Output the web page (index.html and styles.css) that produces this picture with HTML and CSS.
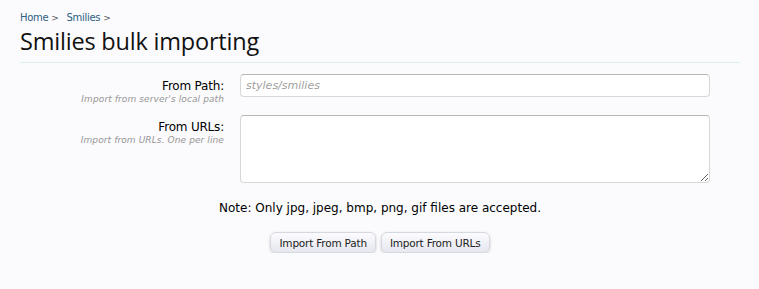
FILE: index.html
```html
<!DOCTYPE html>
<html lang="en">
<head>
    <meta charset="UTF-8">
    <meta name="viewport" content="width=device-width, initial-scale=1.0">
    <title>Smilies bulk importing</title>
    <link rel="stylesheet" href="styles.css">
</head>
<body>
    <div class="pageContent">
        <div class="breadcrumb">
            <a href="#">Home</a><span class="arrow">&gt;</span>
            <a href="#">Smilies</a><span class="arrow">&gt;</span>
        </div>
        <h1 class="titleBar">Smilies bulk importing</h1>

        <form class="xenForm">
            <div class="ctrlUnit">
                <div class="ctrlLabel">
                    <label for="path">From Path:</label>
                    <dfn>Import from server's local path</dfn>
                </div>
                <input id="path" class="textCtrl" type="text" placeholder="styles/smilies">
            </div>
            <div class="ctrlUnit">
                <div class="ctrlLabel">
                    <label for="urls">From URLs:</label>
                    <dfn>Import from URLs. One per line</dfn>
                </div>
                <textarea id="urls" class="textCtrl textArea"></textarea>
            </div>

            <p class="note">Note: Only jpg, jpeg, bmp, png, gif files are accepted.</p>

            <div class="submitUnit">
                <button type="button" class="button">Import From Path</button>
                <button type="button" class="button">Import From URLs</button>
            </div>
        </form>
    </div>
</body>
</html>
```

FILE: styles.css
```css
*
{
    box-sizing: border-box;
}
body
{
    margin: 0px;
    background-color: #fbfbfd;
    font-family: "DejaVu Sans", Verdana, sans-serif;
    font-size: 11px;
    color: #000;
}
.pageContent
{
    padding: 11px 19px 0 20px;
}
.breadcrumb
{
    font-size: 10px;
    height: 14px;
    line-height: 14px;
    letter-spacing: -0.3px;
}
.breadcrumb a
{
    color: #2b6082;
    text-decoration: none;
}
.breadcrumb .arrow
{
    color: #555;
    margin: 0 5px 0 3px;
    font-size: 9px;
}
.titleBar
{
    margin: 0;
    font-family: "Open Sans", "DejaVu Sans", sans-serif;
    font-weight: normal;
    font-size: 23.5px;
    line-height: 33px;
    letter-spacing: -0.2px;
    color: #111;
    padding-bottom: 4px;
    border-bottom: 1px solid #dcefef;
}
.xenForm
{
    padding-top: 11px;
}
.ctrlUnit
{
    display: grid;
    grid-template-columns: 204px 470px;
    column-gap: 16px;
    margin-bottom: 10px;
}
.ctrlLabel
{
    text-align: right;
    padding-top: 4px;
}
.ctrlLabel label
{
    display: block;
    font-size: 12px;
    line-height: 16px;
    letter-spacing: -0.2px;
}
.ctrlLabel dfn
{
    display: block;
    font-size: 9px;
    line-height: 11px;
    color: #969696;
    font-style: italic;
    letter-spacing: 0.1px;
}
.textCtrl
{
    display: block;
    width: 470px;
    height: 23px;
    margin: 0;
    padding: 2px 5px;
    font-family: "DejaVu Sans", Verdana, sans-serif;
    font-size: 11px;
    background-color: #fff;
    border: 1px solid #d7d7d7;
    border-top-color: #b6b6b6;
    border-radius: 4px;
    outline: 0px;
}
.textCtrl::placeholder
{
    color: #a0a0a0;
    font-style: italic;
}
.textArea
{
    height: 68px;
    resize: vertical;
}
.note
{
    margin: 0;
    margin-top: 17px;
    text-align: center;
    width: 720px;
    font-size: 12px;
    line-height: 16px;
}
.submitUnit
{
    width: 720px;
    display: flex;
    justify-content: center;
    gap: 5px;
    margin-top: 16px;
}
.button
{
    height: 21px;
    padding: 0 8px;
    font-family: "DejaVu Sans", Verdana, sans-serif;
    font-size: 10.5px;
    letter-spacing: -0.2px;
    color: #222;
    background: linear-gradient(#fcfcff, #e6e7ef);
    border: 1px solid #d6d8e0;
    border-radius: 6px;
    box-shadow: 0 1px 3px rgba(0, 0, 0, 0.18);
    cursor: pointer;
}
.button:hover
{
    background: #fff;
}
```
